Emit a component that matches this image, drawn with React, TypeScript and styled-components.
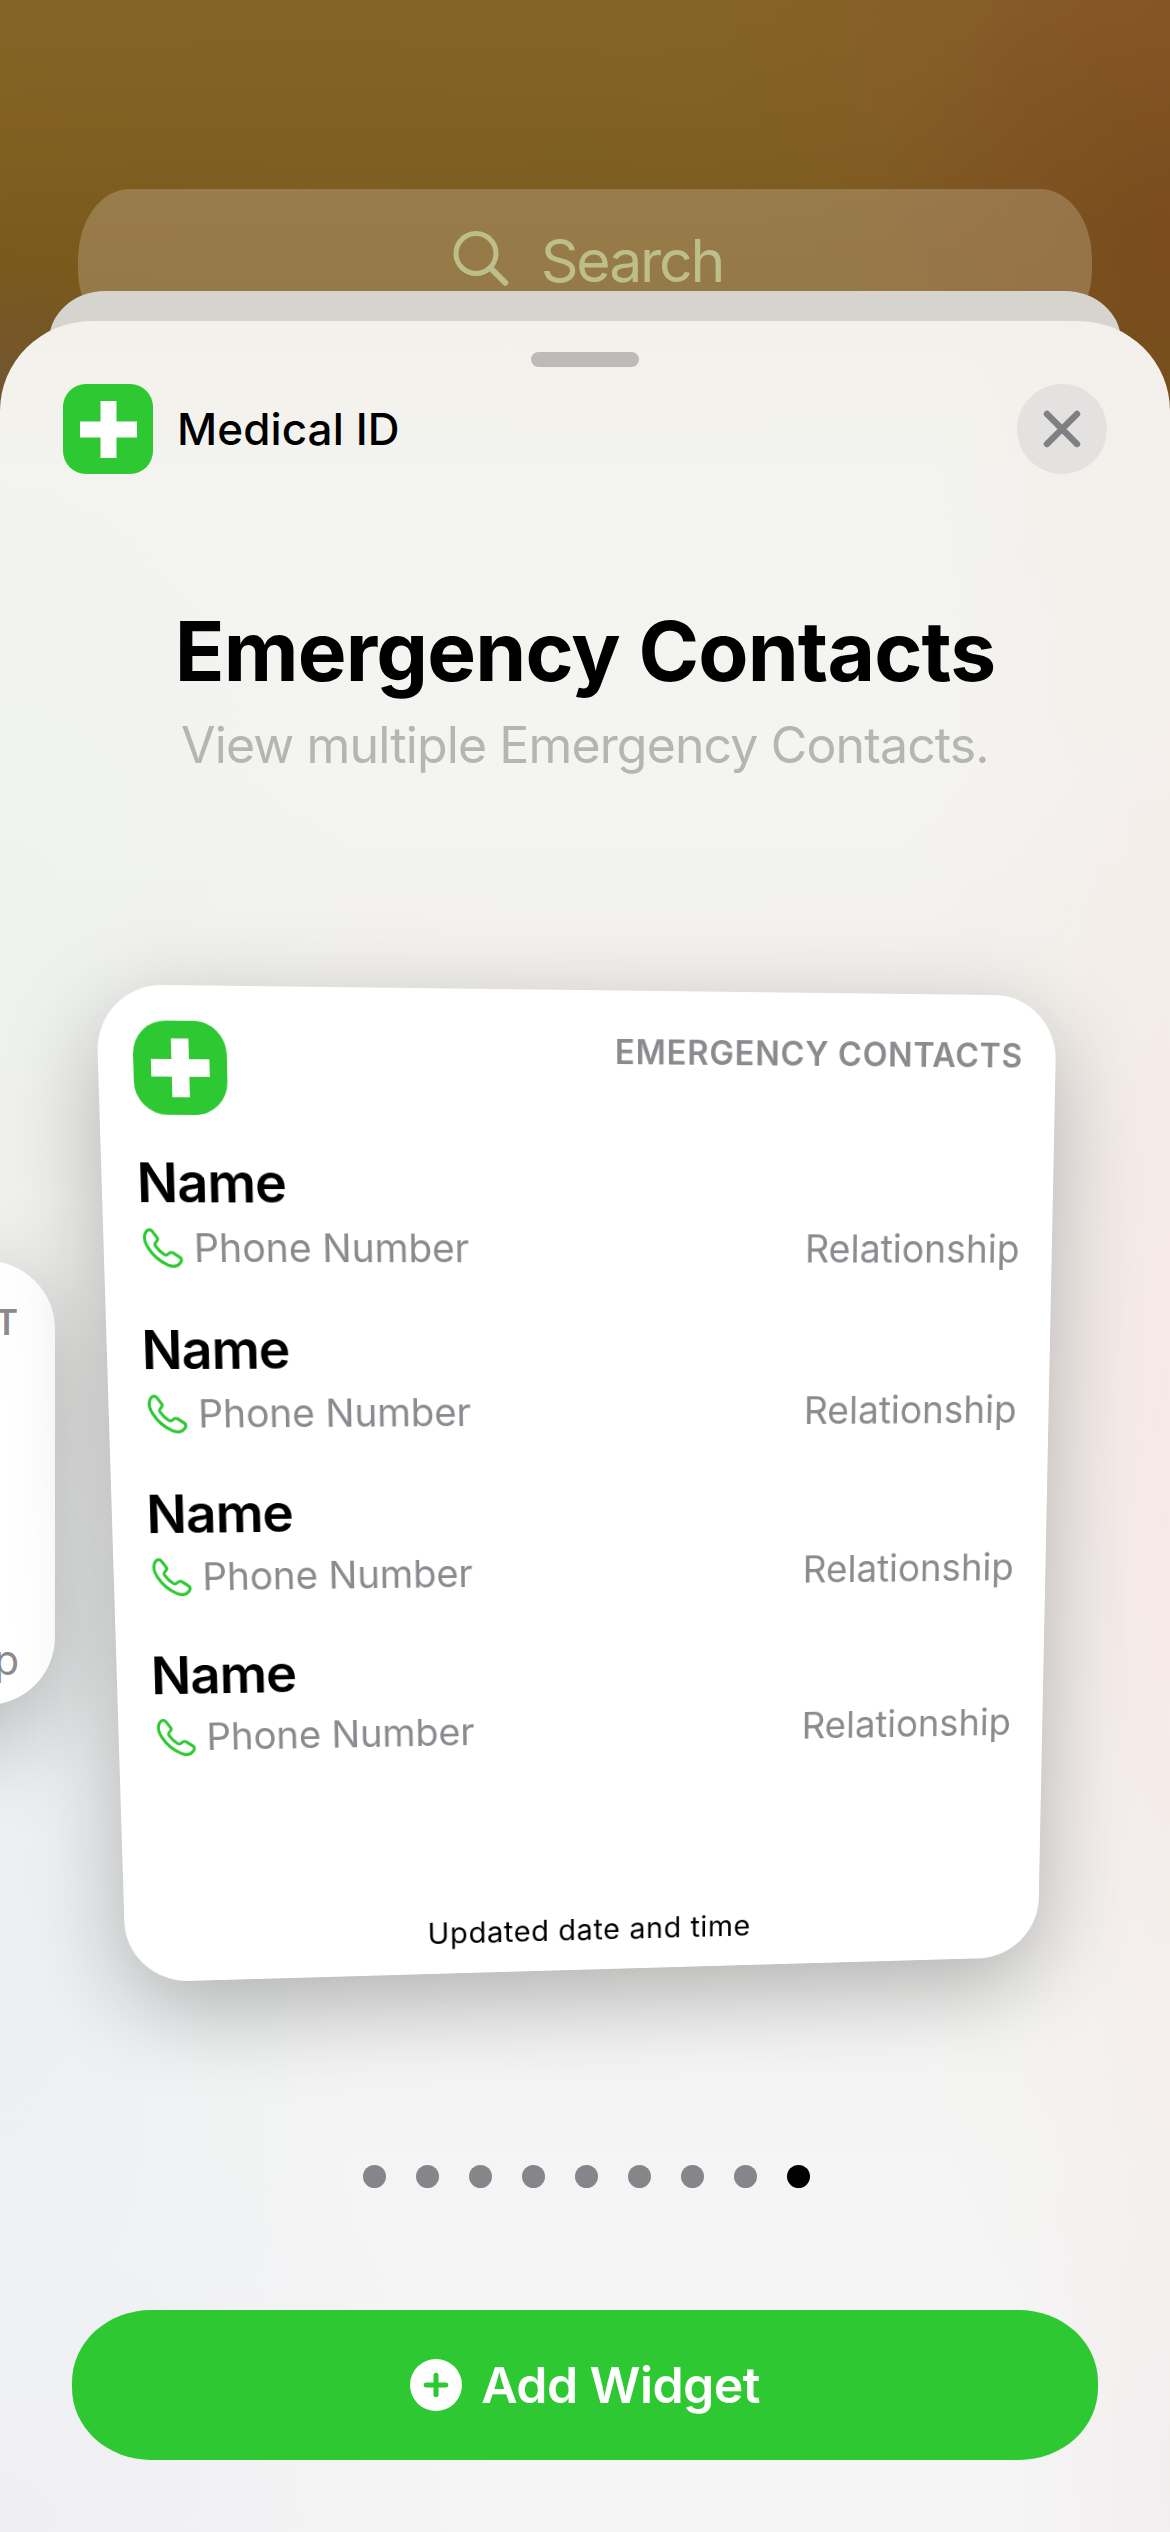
import React from 'react';
import styled, { createGlobalStyle } from 'styled-components';

const GREEN = '#2dc832';
const FONT = "Inter, 'Liberation Sans', sans-serif";

const GlobalStyle = createGlobalStyle`
  *, *::before, *::after { box-sizing: border-box; }
  html, body { margin: 0; padding: 0; }
  body { width: 1170px; height: 2532px; overflow: hidden; background: #7c5a1d; }
`;

type Point = [number, number];

/* CSS matrix3d that carries a width x height box onto the corners TL, TR, BR, BL. */
function projectBox(width: number, height: number, corners: [Point, Point, Point, Point]): string {
  const [[x0, y0], [x1, y1], [x2, y2], [x3, y3]] = corners;
  const dx1 = x1 - x2, dx2 = x3 - x2, sx = x0 - x1 + x2 - x3;
  const dy1 = y1 - y2, dy2 = y3 - y2, sy = y0 - y1 + y2 - y3;
  const den = dx1 * dy2 - dx2 * dy1;
  const g = (sx * dy2 - dx2 * sy) / den;
  const h = (dx1 * sy - sx * dy1) / den;
  const a = (x1 - x0 + g * x1) / width;
  const b = (x3 - x0 + h * x3) / height;
  const d = (y1 - y0 + g * y1) / width;
  const e = (y3 - y0 + h * y3) / height;
  return `matrix3d(${[a, d, 0, g / width, b, e, 0, h / height, 0, 0, 1, 0, x0, y0, 0, 1].join(',')})`;
}

const CARD_W = 1014;
const CARD_H = 1062;
const CARD_TILT = projectBox(CARD_W, CARD_H, [
  [17.6, 24.2],
  [978.9, 35.8],
  [959.6, 996.7],
  [48.2, 1022.7],
]);

const Screen = styled.main`
  position: relative;
  width: 1170px;
  height: 2532px;
  overflow: hidden;
  font-family: ${FONT};
  display: flex;
  flex-direction: column;
  background:
    radial-gradient(150px 140px at 0 400px, rgba(112, 86, 52, 0.9), rgba(112, 86, 52, 0)),
    radial-gradient(340px 320px at 1190px 260px, rgba(120, 72, 28, 0.85), rgba(120, 72, 28, 0)),
    radial-gradient(460px 340px at 1170px 0, rgba(136, 86, 40, 0.9), rgba(136, 86, 40, 0)),
    linear-gradient(180deg, #856427 0, #82622500 240px),
    linear-gradient(180deg, #80622600 0, #78561c 400px),
    linear-gradient(90deg, #80601f 0, #7d6122 50%, #815a24 100%);
`;

const SearchBar = styled.div`
  flex: none;
  margin: 189px 78px 0;
  height: 150px;
  border-radius: 52px / 70px;
  background: rgba(205, 185, 155, 0.34);
  display: flex;
  justify-content: center;
  padding: 41px 0 0 6px;
  gap: 32px;
`;

const SearchText = styled.span`
  font-size: 59px;
  line-height: 62px;
  letter-spacing: -2.2px;
  color: #bcbf8a;
`;

const BackSheet = styled.div`
  flex: none;
  margin: -48px 49px 0;
  height: 90px;
  border-radius: 56px 56px 0 0 / 50px 50px 0 0;
  background: #d6d4cf;
`;

const Sheet = styled.section`
  flex: none;
  margin-top: -60px;
  height: 2211px;
  border-radius: 92px 92px 0 0 / 90px 90px 0 0;
  overflow: hidden;
  display: flex;
  flex-direction: column;
  align-items: center;
  background:
    radial-gradient(170px 800px at 1180px 1150px, rgba(247, 232, 231, 0.85), rgba(247, 232, 231, 0)),
    radial-gradient(300px 1300px at 1180px 1000px, rgba(243, 238, 234, 0.9), rgba(243, 238, 234, 0)),
    radial-gradient(260px 600px at 1190px 200px, rgba(244, 239, 234, 0.8), rgba(244, 239, 234, 0)),
    radial-gradient(180px 500px at 1190px 2150px, rgba(243, 236, 238, 0.9), rgba(243, 236, 238, 0)),
    radial-gradient(500px 500px at 0 2211px, rgba(239, 239, 243, 0.9), rgba(239, 239, 243, 0)),
    radial-gradient(360px 800px at 0 1650px, rgba(234, 239, 242, 0.8), rgba(234, 239, 242, 0)),
    radial-gradient(360px 460px at 0 600px, rgba(238, 242, 239, 0.8), rgba(238, 242, 239, 0)),
    linear-gradient(180deg, #f3f1eb 0, #f3f3ef 150px, #f4f4f2 450px, #f2f1ed 650px, #f2f3f1 1500px, #f5f5f5 2000px);
`;

const Grabber = styled.div`
  flex: none;
  width: 108px;
  height: 15px;
  margin-top: 31px;
  border-radius: 8px;
  background: #bcbbb9;
`;

const Header = styled.header`
  flex: none;
  width: 100%;
  margin-top: 17px;
  padding: 0 63px;
  display: flex;
  align-items: center;
`;

const AppName = styled.span`
  flex: 1;
  margin-left: 24px;
  font-size: 44px;
  line-height: 54px;
  font-weight: 530;
  letter-spacing: 0.1px;
  color: #000;
`;

const CloseButton = styled.button`
  width: 90px;
  height: 90px;
  padding: 0;
  border: 0;
  border-radius: 50%;
  background: #e3e2e0;
  display: grid;
  place-items: center;
`;

const Title = styled.h1`
  flex: none;
  margin: 129px 0 0;
  font-size: 82px;
  line-height: 98px;
  font-weight: 700;
  letter-spacing: -0.85px;
  white-space: nowrap;
  color: #000;
`;

const Subtitle = styled.p`
  flex: none;
  margin: 14px 0 0;
  font-size: 50px;
  line-height: 60px;
  letter-spacing: -0.87px;
  white-space: nowrap;
  color: #b5b6b2;
`;

const Carousel = styled.div`
  flex: none;
  position: relative;
  width: 100%;
  height: 1062px;
  margin-top: 185px;
  padding-left: 78px;
`;

const CARD_SHADOW = '0 32px 100px rgba(0, 0, 0, 0.27)';

const PreviousCard = styled.article`
  position: absolute;
  left: -959px;
  top: 301px;
  width: 1014px;
  height: 444px;
  padding: 34px 36px 20px;
  border-radius: 68px;
  background: #fff;
  box-shadow: ${CARD_SHADOW};
  display: flex;
  flex-direction: column;
  justify-content: space-between;
  align-items: flex-end;
`;

const TiltedCard = styled.article`
  position: relative;
  width: ${CARD_W}px;
  height: ${CARD_H}px;
  padding: 36px;
  border-radius: 68px;
  background: #fff;
  box-shadow: ${CARD_SHADOW};
  transform-origin: 0 0;
  transform: ${CARD_TILT};
  display: flex;
  flex-direction: column;
`;

const CardHeader = styled.div`
  flex: none;
  height: 96px;
  display: flex;
  justify-content: space-between;
`;

const CardKind = styled.span`
  font-size: 35px;
  line-height: 40px;
  font-weight: 600;
  letter-spacing: 0.8px;
  margin-top: 7px;
  color: #8b8a8e;
`;

const ContactList = styled.ul`
  list-style: none;
  margin: 37px 0 0;
  padding: 0;
  display: flex;
  flex-direction: column;
`;

const Contact = styled.li`
  height: 174px;
  display: flex;
  flex-direction: column;
`;

const ContactName = styled.strong`
  font-size: 56px;
  line-height: 66px;
  font-weight: 600;
  letter-spacing: -1px;
  color: #000;
`;

const ContactDetails = styled.div`
  height: 68px;
  padding-left: 4px;
  display: flex;
  align-items: center;
`;

const Detail = styled.span`
  font-size: 41px;
  line-height: 50px;
  color: #8b8a8e;
`;

const PhoneText = styled(Detail)`
  flex: 1;
  margin-left: 11px;
  letter-spacing: -0.15px;
`;

const CardFooter = styled.div`
  margin-top: auto;
  margin-bottom: -11px;
  text-align: center;
  font-size: 32px;
  line-height: 40px;
  letter-spacing: 0.7px;
  color: #000;
`;

const Pager = styled.div`
  flex: none;
  margin: 143px 0 0 3px;
  display: flex;
  gap: 30px;
`;

const Dot = styled.span<{ $active: boolean }>`
  width: 23px;
  height: 23px;
  border-radius: 50%;
  background: ${(p) => (p.$active ? '#000' : '#868589')};
`;

const AddButton = styled.button`
  flex: none;
  width: 1026px;
  height: 150px;
  margin-top: 122px;
  padding: 0;
  border: 0;
  border-radius: 79px / 72px;
  background: ${GREEN};
  display: flex;
  align-items: center;
  justify-content: center;
  gap: 19px;
  font-family: ${FONT};
  font-size: 50px;
  font-weight: 600;
  letter-spacing: -0.6px;
  color: #fff;
`;

const IconTile = styled.span<{ $size: number; $radius: number }>`
  flex: none;
  width: ${(p) => p.$size}px;
  height: ${(p) => p.$size}px;
  border-radius: ${(p) => p.$radius}px;
  background: ${GREEN};
  display: grid;
  place-items: center;
`;

const MedicalIcon = ({ size, radius, cross, bar }: { size: number; radius: number; cross: number; bar: number }) => {
  const near = (cross - bar) / 2;
  return (
    <IconTile $size={size} $radius={radius}>
      <svg width={cross} height={cross} viewBox={`0 0 ${cross} ${cross}`} fill="#fff">
        <rect x={near} y={0} width={bar} height={cross} />
        <rect x={0} y={near} width={cross} height={bar} />
      </svg>
    </IconTile>
  );
};

const SearchIcon = () => (
  <svg width="56" height="58" viewBox="0 0 56 58" fill="none" stroke="#bcbf8a" strokeLinecap="round">
    <circle cx="23" cy="23.5" r="20" strokeWidth="5" />
    <path d="M38.5 39 L52.2 52.7" strokeWidth="6" />
  </svg>
);

const CloseIcon = () => (
  <svg width="38" height="38" viewBox="0 0 38 38" stroke="#807f83" strokeWidth="6.5" strokeLinecap="round">
    <path d="M4 4 L34 34 M34 4 L4 34" />
  </svg>
);

const PhoneIcon = () => (
  <svg width="42" height="42" viewBox="-0.4 -0.6 41 41" fill="none" stroke={GREEN} strokeWidth="3.1" strokeLinejoin="round">
    <path d="M3.2 4.5 C5 1.5 8 1 9.8 3.4 L14.6 10 C15.5 11.5 15 12.6 13.8 13.8 C12 15.6 11.6 16.6 12.9 18.6 C15.2 22 18 24.9 21.4 27 C23.2 28.1 24.2 27.7 25.9 26 C27.4 24.6 28.4 24.3 30 25.2 L37 29.8 C39.4 31.6 38.8 33.6 37 35.8 C34.4 39.2 30 39.8 24.4 37.4 C17 34 9.8 27.6 5.2 20 C2 14.6 0.8 8.6 3.2 4.5 Z" />
  </svg>
);

const PlusIcon = () => (
  <svg width="52" height="52" viewBox="0 0 52 52">
    <circle cx="26" cy="26" r="26" fill="#fff" />
    <path d="M26 16.2 V35.8 M16.2 26 H35.8" stroke={GREEN} strokeWidth="5" strokeLinecap="round" />
  </svg>
);

const contacts = Array.from({ length: 4 }, () => ({
  name: 'Name',
  phone: 'Phone Number',
  relationship: 'Relationship',
}));

const PAGES = 9;

export default function App() {
  return (
    <>
      <GlobalStyle />
      <Screen>
        <SearchBar>
          <SearchIcon />
          <SearchText>Search</SearchText>
        </SearchBar>
        <BackSheet />
        <Sheet>
          <Grabber />
          <Header>
            <MedicalIcon size={90} radius={23} cross={57} bar={16} />
            <AppName>Medical ID</AppName>
            <CloseButton aria-label="Close">
              <CloseIcon />
            </CloseButton>
          </Header>
          <Title>Emergency Contacts</Title>
          <Subtitle>View multiple Emergency Contacts.</Subtitle>
          <Carousel>
            <PreviousCard>
              <CardKind>T</CardKind>
              <Detail>p</Detail>
            </PreviousCard>
            <TiltedCard>
              <CardHeader>
                <MedicalIcon size={96} radius={34} cross={60} bar={18} />
                <CardKind>EMERGENCY CONTACTS</CardKind>
              </CardHeader>
              <ContactList>
                {contacts.map((c, i) => (
                  <Contact key={i}>
                    <ContactName>{c.name}</ContactName>
                    <ContactDetails>
                      <PhoneIcon />
                      <PhoneText>{c.phone}</PhoneText>
                      <Detail>{c.relationship}</Detail>
                    </ContactDetails>
                  </Contact>
                ))}
              </ContactList>
              <CardFooter>Updated date and time</CardFooter>
            </TiltedCard>
          </Carousel>
          <Pager>
            {Array.from({ length: PAGES }, (_, i) => (
              <Dot key={i} $active={i === PAGES - 1} />
            ))}
          </Pager>
          <AddButton>
            <PlusIcon />
            Add Widget
          </AddButton>
        </Sheet>
      </Screen>
    </>
  );
}
